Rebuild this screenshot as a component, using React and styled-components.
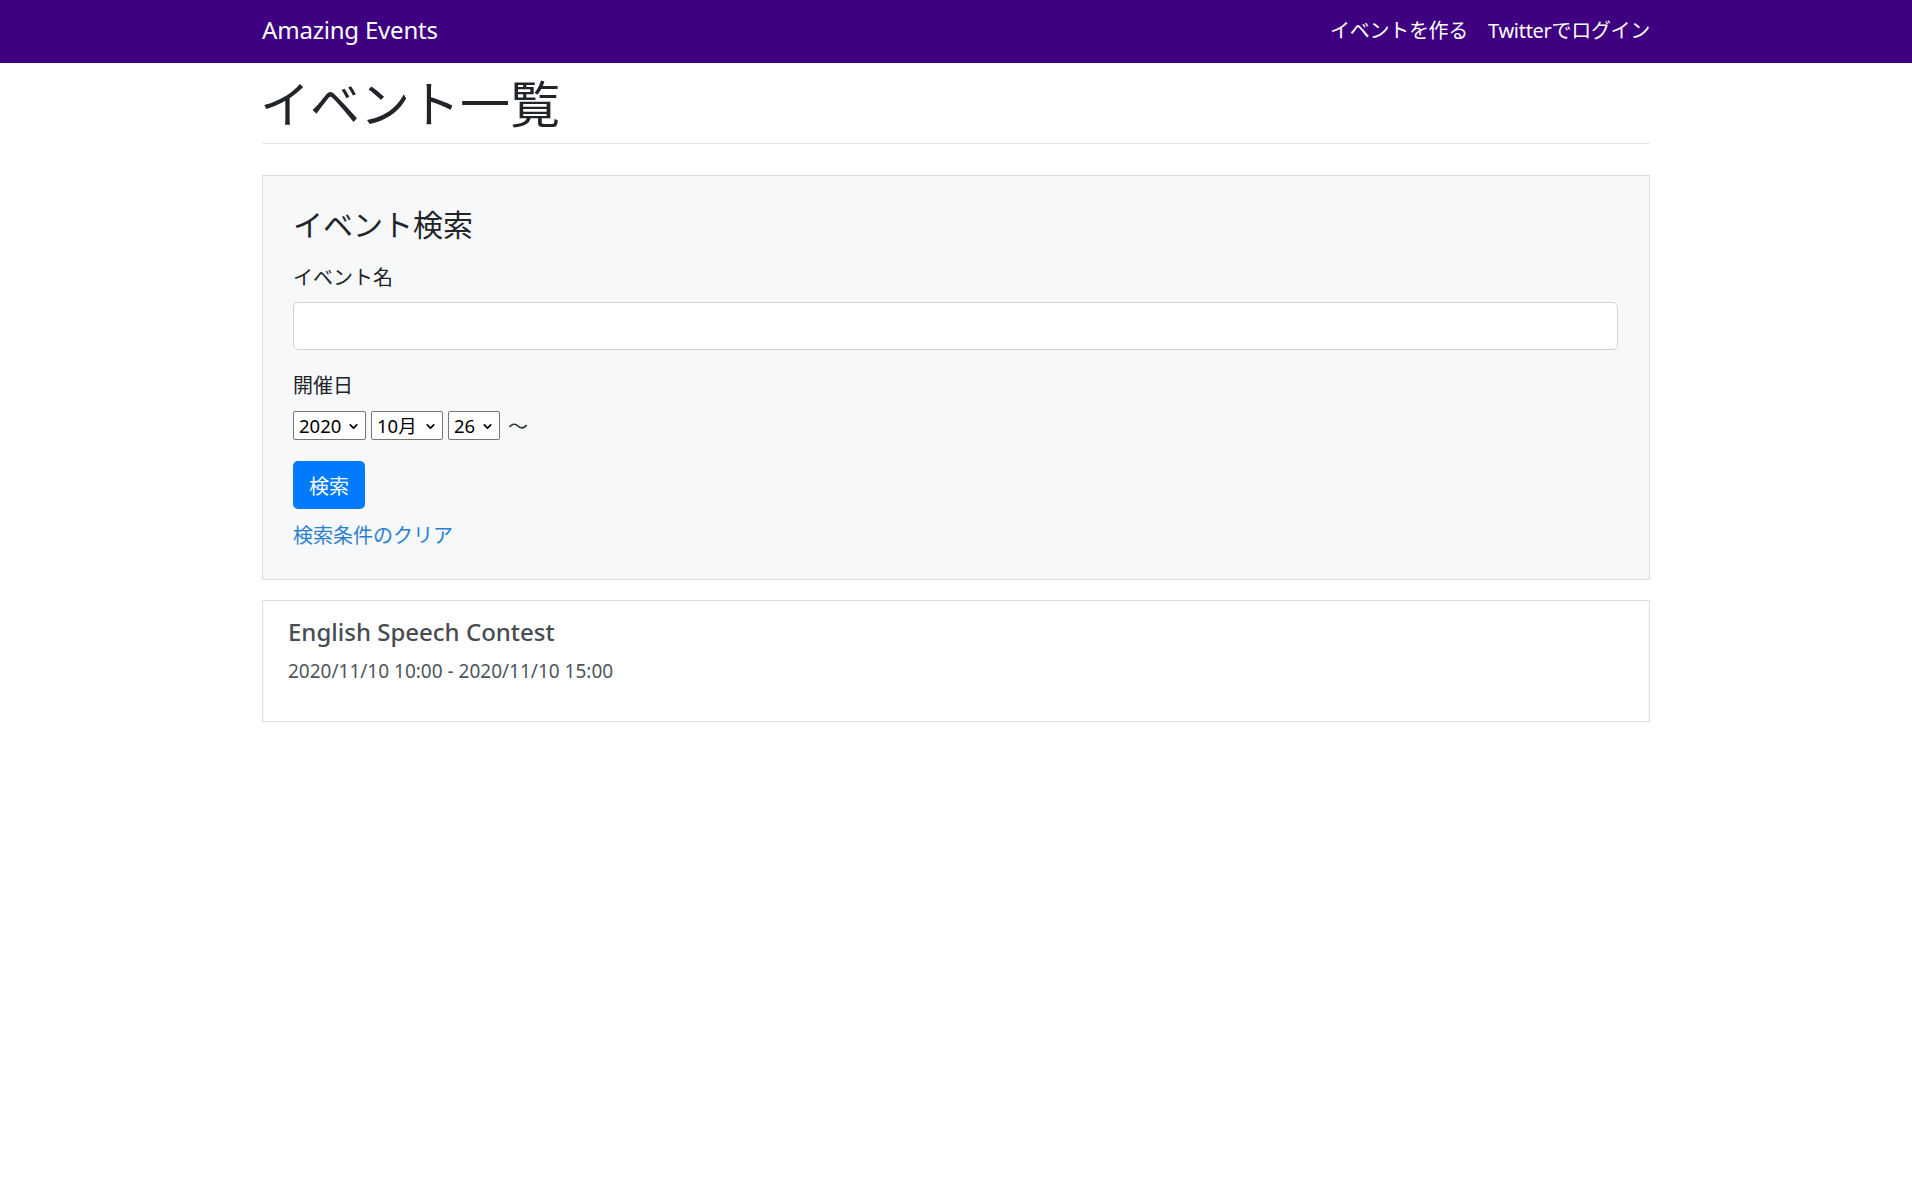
import React from "react";
import styled, { createGlobalStyle } from "styled-components";
import { ChevronDown } from "lucide-react";

const GlobalStyle = createGlobalStyle`
  html, body {
    margin: 0;
    padding: 0;
    background: #ffffff;
  }
  body {
    font-family: "Noto Sans", "Noto Sans CJK JP", sans-serif;
    color: #212529;
  }
  * {
    box-sizing: border-box;
  }
`;

const NavBar = styled.nav`
  height: 63px;
  background: #3e0080;
  display: flex;
  justify-content: center;
`;

const NavInner = styled.div`
  width: 1388px;
  display: flex;
  align-items: center;
  justify-content: space-between;
`;

const Brand = styled.a`
  color: #ffffff;
  font-size: 24px;
  text-decoration: none;
  letter-spacing: -0.2px;
  padding-bottom: 4px;
`;

const NavLinks = styled.div`
  display: flex;
  gap: 20px;
  padding-bottom: 4px;
`;

const NavLink = styled.a`
  color: #ffffff;
  font-size: 20px;
  text-decoration: none;
  letter-spacing: -0.3px;
`;

const Container = styled.main`
  width: 1388px;
  margin: 0 auto;
`;

const PageHeader = styled.div`
  margin-top: 12px;
  padding-bottom: 9px;
  border-bottom: 1px solid #e2e4e6;
`;

const PageTitle = styled.h1`
  margin: 0;
  font-size: 50px;
  font-weight: 400;
  line-height: 1.18;
  margin-left: -2px;
`;

const SearchCard = styled.section`
  margin-top: 31px;
  background: #f7f8fa;
  border: 1px solid #dcdfe2;
  padding: 31px 31px 29px 30px;
`;

const SearchTitle = styled.h4`
  margin: 0 0 21px;
  font-size: 30px;
  font-weight: 400;
  line-height: 1.17;
`;

const FormGroup = styled.div`
  margin-bottom: ${p => p.$gap || 20}px;
`;

const Label = styled.label`
  display: block;
  font-size: 20px;
  line-height: 29px;
  margin-bottom: ${p => p.$gap || 10}px;
`;

const TextInput = styled.input`
  display: block;
  width: 100%;
  height: 48px;
  border: 1px solid #ced4da;
  border-radius: 5px;
  background: #ffffff;
  font-size: 19px;
  padding: 0 14px;
`;

const DateRow = styled.div`
  display: flex;
  align-items: center;
  gap: 5px;
  height: 29px;
`;

const SelectWrap = styled.span`
  position: relative;
  display: inline-flex;
`;

const Select = styled.select`
  appearance: none;
  -webkit-appearance: none;
  height: 29px;
  width: ${p => p.$w}px;
  border: 1px solid #767676;
  border-radius: 2px;
  background: #ffffff;
  color: #000000;
  font-family: "Noto Sans", "Noto Sans CJK JP", sans-serif;
  font-size: 18.5px;
  padding: 0 0 0 5px;
`;

const Caret = styled(ChevronDown)`
  position: absolute;
  right: 6px;
  top: 9px;
  pointer-events: none;
  color: #000000;
`;

const Tilde = styled.span`
  font-size: 20px;
  margin-left: 3px;
  color: #333;
`;

const Button = styled.button`
  display: block;
  height: 48px;
  padding: 0 16px;
  border: none;
  border-radius: 5px;
  background: #007bff;
  color: #ffffff;
  font-family: "Noto Sans", "Noto Sans CJK JP", sans-serif;
  font-size: 20px;
  margin-top: -1px;
  margin-bottom: 12px;
`;

const ClearLink = styled.a`
  display: block;
  color: #2a7fd0;
  font-size: 20px;
  line-height: 29px;
  text-decoration: none;
`;

const EventCard = styled.article`
  margin-top: 20px;
  border: 1px solid #dcdfe2;
  background: #ffffff;
  padding: 16px 25px 35px;
`;

const EventTitle = styled.h5`
  margin: 0 0 11px;
  font-size: 24px;
  font-weight: 500;
  line-height: 29px;
  color: #474c52;
`;

const EventDate = styled.p`
  margin: 0;
  font-size: 19px;
  line-height: 29px;
  color: #4e555c;
`;

const selects = [
  { value: "2020", label: "2020", w: 73 },
  { value: "10", label: "10月", w: 72 },
  { value: "26", label: "26", w: 52 },
];

const events = [
  {
    id: 1,
    name: "English Speech Contest",
    period: "2020/11/10 10:00 - 2020/11/10 15:00",
  },
];

export default function App() {
  return (
    <>
      <GlobalStyle />
      <NavBar>
        <NavInner>
          <Brand href="#">Amazing Events</Brand>
          <NavLinks>
            <NavLink href="#">イベントを作る</NavLink>
            <NavLink href="#">Twitterでログイン</NavLink>
          </NavLinks>
        </NavInner>
      </NavBar>
      <Container>
        <PageHeader>
          <PageTitle>イベント一覧</PageTitle>
        </PageHeader>

        <SearchCard>
          <SearchTitle>イベント検索</SearchTitle>
          <FormGroup $gap={21}>
            <Label $gap={10}>イベント名</Label>
            <TextInput type="text" />
          </FormGroup>
          <FormGroup $gap={22}>
            <Label $gap={11}>開催日</Label>
            <DateRow>
              {selects.map(s => (
                <SelectWrap key={s.value}>
                  <Select $w={s.w} defaultValue={s.value}>
                    <option value={s.value}>{s.label}</option>
                  </Select>
                  <Caret size={13} strokeWidth={3} />
                </SelectWrap>
              ))}
              <Tilde>〜</Tilde>
            </DateRow>
          </FormGroup>
          <Button type="button">検索</Button>
          <ClearLink href="#">検索条件のクリア</ClearLink>
        </SearchCard>

        {events.map(ev => (
          <EventCard key={ev.id}>
            <EventTitle>{ev.name}</EventTitle>
            <EventDate>{ev.period}</EventDate>
          </EventCard>
        ))}
      </Container>
    </>
  );
}
